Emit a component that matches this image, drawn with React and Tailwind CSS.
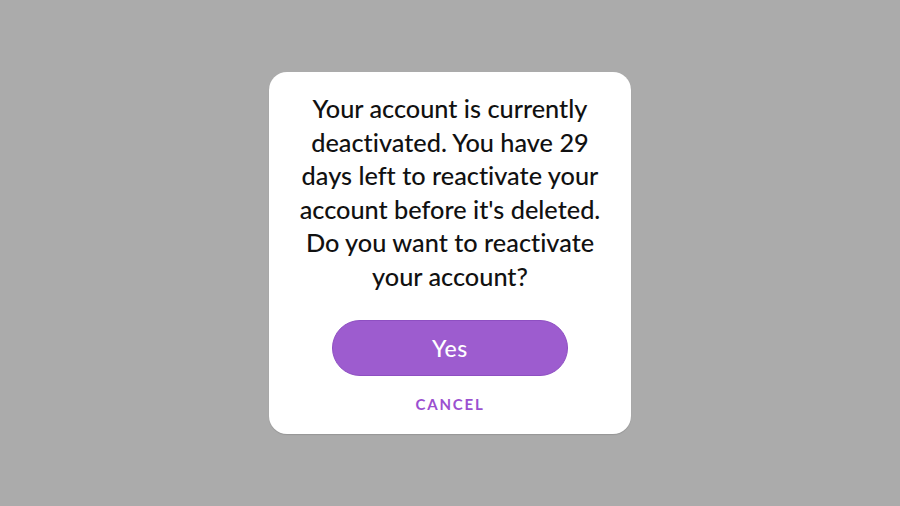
import React from 'react';

const App = () => {
  return (
    <div className="w-[900px] h-[506px] bg-[#ababab] flex items-center justify-center" style={{ fontFamily: 'Lato, "Noto Sans", sans-serif' }}>
      <div className="w-[362px] h-[362px] bg-white rounded-[18px] flex flex-col items-center pt-[20px] pb-[20px] shadow-[0_1px_1px_rgba(0,0,0,0.12)]">
        <p className="text-center text-[25.3px] leading-[33.5px] text-[#111111] font-medium [font-variant-ligatures:none]">
          Your account is currently<br />
          deactivated. You have 29<br />
          days left to reactivate your<br />
          account before it's deleted.<br />
          Do you want to reactivate<br />
          your account?
        </p>
        <button className="mt-[27px] w-[236px] h-[56px] rounded-full bg-[#9d5ccf] border border-[#8e4fc2] text-white text-[23px] font-medium tracking-wide">
          Yes
        </button>
        <button className="mt-[18px] text-[15px] leading-[20px] font-bold tracking-[0.12em] text-[#9b50d0]">
          CANCEL
        </button>
      </div>
    </div>
  );
};

export default App;
